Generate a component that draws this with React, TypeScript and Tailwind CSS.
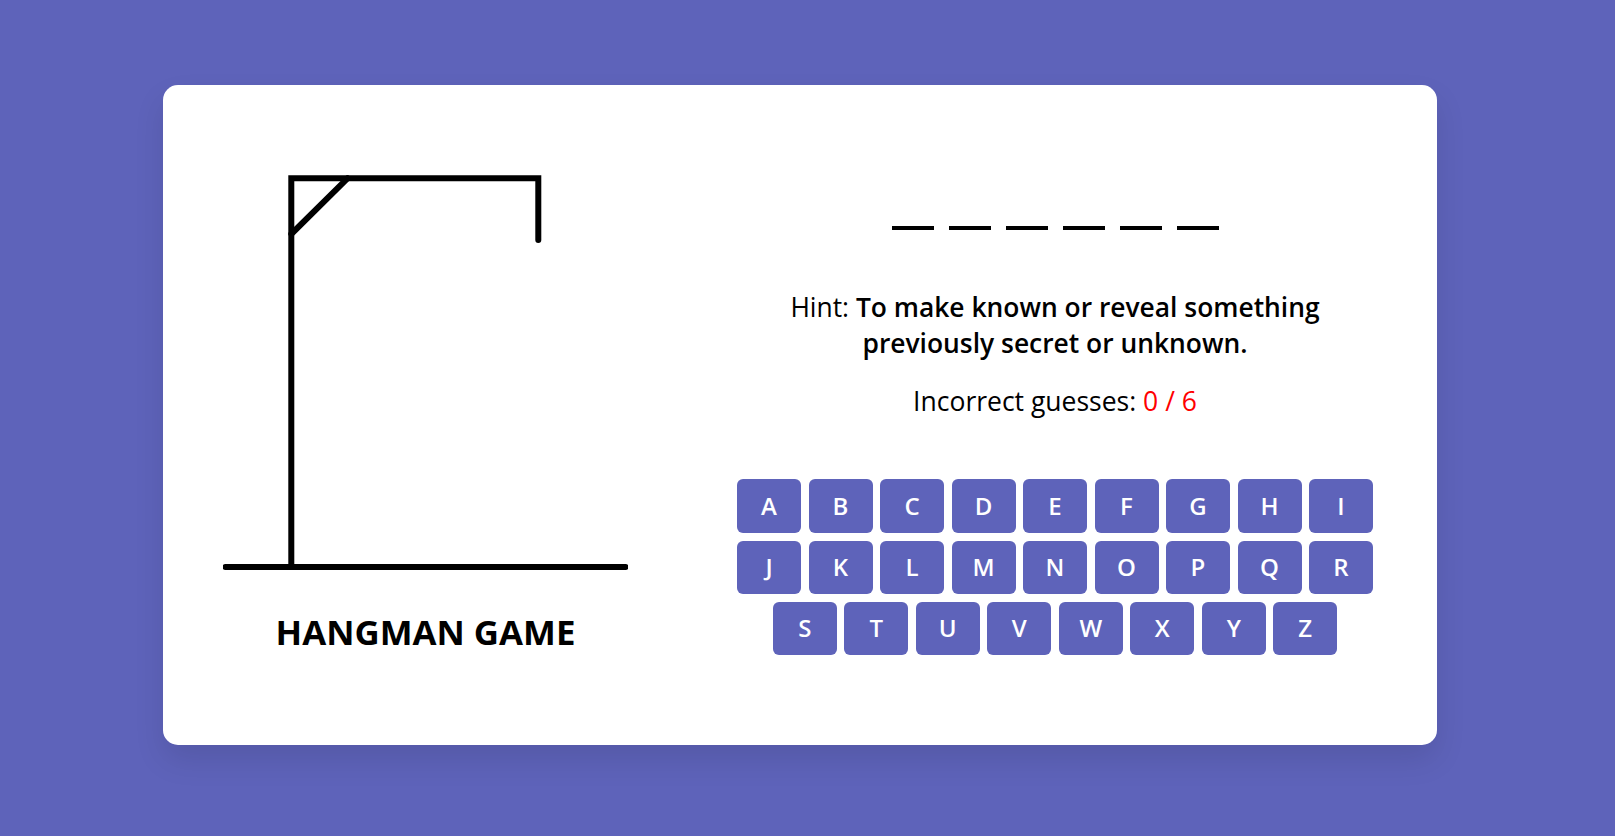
const letters = "ABCDEFGHIJKLMNOPQRSTUVWXYZ".split("");

function Gallows() {
  return (
    <svg width="405" height="403" viewBox="0 0 405 403" fill="none" className="block">
      <g stroke="#000" strokeWidth="6" strokeLinecap="round" strokeLinejoin="round">
        <path d="M68.3 392V3.3H315.3V65" strokeLinejoin="miter" strokeLinecap="round" />
        <path d="M68.3 59L124.5 3.3" />
        <path d="M2.5 392H402.5" />
      </g>
    </svg>
  );
}

export default function App() {
  return (
    <div
      className="min-h-screen bg-[#5E63BA] flex justify-center items-start pt-[85px] pr-[15px]"
      style={{ fontFamily: '"Open Sans", "Liberation Sans", sans-serif' }}
    >
      <div className="w-[1274px] flex items-end gap-[105px] px-[60px] py-[90px] bg-white rounded-[15px] shadow-[0_15px_30px_rgba(0,0,0,0.1)]">
        {/* hangman drawing */}
        <div className="w-[405px] shrink-0">
          <Gallows />
          <h1 className="mt-[30px] text-center text-[34.8px] leading-[1.362] font-bold text-black uppercase">
            Hangman Game
          </h1>
        </div>

        {/* game */}
        <div className="flex-1">
          <ul className="flex items-center justify-center gap-[15px]">
            {Array.from({ length: 6 }).map((_, i) => (
              <li key={i} className="w-[42px] h-[44px] mb-[60px] border-b-[4.5px] border-black"></li>
            ))}
          </ul>
          <h4 className="text-center text-[26.4px] leading-[1.362] font-medium text-black mb-[21px]">
            Hint: <b className="font-semibold">To make known or reveal something previously secret or unknown.</b>
          </h4>
          <h4 className="text-center text-[26.5px] leading-[1.362] font-medium text-black">
            Incorrect guesses: <span className="text-[#ff0000]">0 / 6</span>
          </h4>
          <div className="mt-[60px] flex flex-wrap justify-center gap-[7.5px]">
            {letters.map((l) => (
              <button
                key={l}
                className="w-[64px] p-[10.5px] bg-[#5E63BA] text-white text-[24px] leading-[1.362] font-semibold rounded-[6px]"
              >
                {l}
              </button>
            ))}
          </div>
        </div>
      </div>
    </div>
  );
}
